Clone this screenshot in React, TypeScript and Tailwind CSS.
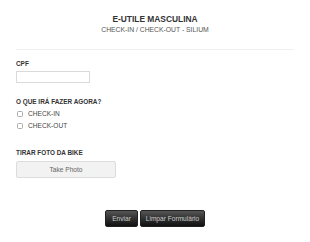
export default function App() {
  return (
    <div className="w-[310px] h-[242px] bg-white px-4 font-['Liberation_Sans',Arial,sans-serif]">
      {/* header */}
      <div className="pt-[14px] text-center">
        <p className="text-[8.4px] leading-[10px] font-bold text-[#333]">E-UTILE MASCULINA</p>
        <p className="mt-[1px] text-[6.8px] leading-[9px] text-[#555]">CHECK-IN / CHECK-OUT - SILIUM</p>
      </div>
      <div className="mt-[15px] border-t border-[#f0f0f0]" />

      {/* cpf */}
      <p className="mt-[10px] text-[6.4px] leading-[8px] font-bold text-[#333]">CPF</p>
      <input type="text" className="mt-[3px] block w-[74px] h-[12px] border border-[#dadada] bg-white" />

      {/* action */}
      <p className="mt-[15px] text-[6.4px] leading-[8px] font-bold text-[#333]">O QUE IRÁ FAZER AGORA?</p>
      <div className="mt-[2px] flex flex-col">
        {['CHECK-IN', 'CHECK-OUT'].map((t) => (
          <label key={t} className="flex items-center h-[12px] pl-[1px]">
            <span className="w-[6px] h-[6px] border border-[#aaa] rounded-[1.5px]" />
            <span className="ml-[5px] text-[6.6px] leading-[8px] text-[#444]">{t}</span>
          </label>
        ))}
      </div>

      {/* photo */}
      <p className="mt-[17px] text-[6.4px] leading-[8px] font-bold text-[#333]">TIRAR FOTO DA BIKE</p>
      <button
        type="button"
        className="mt-[4px] flex items-center justify-center w-[100px] h-[17px] bg-[#f2f2f2] border border-[#dcdcdc] rounded-[2px] text-[6.6px] text-[#666]"
      >
        Take Photo
      </button>

      {/* actions */}
      <div className="mt-[32px] flex justify-center gap-[2px]">
        <button
          type="button"
          className="w-[33px] h-[17px] rounded-[2px] border border-[#222] bg-gradient-to-b from-[#555] to-[#111] text-[6.6px] text-[#ccc]"
        >
          Enviar
        </button>
        <button
          type="button"
          className="w-[65px] h-[17px] rounded-[2px] border border-[#222] bg-gradient-to-b from-[#555] to-[#111] text-[6.6px] text-[#ccc]"
        >
          Limpar Formulário
        </button>
      </div>
    </div>
  );
}
